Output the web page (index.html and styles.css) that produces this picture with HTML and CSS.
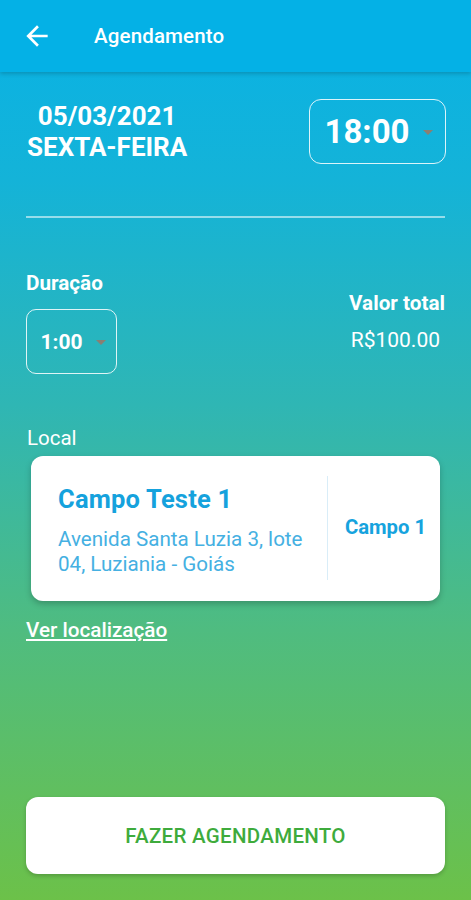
FILE: index.html
```html
<!DOCTYPE html>
<html lang="pt">
<head>
<meta charset="utf-8">
<title>Agendamento</title>
<link rel="stylesheet" href="styles.css">
</head>
<body>
<div class="app">
  <header class="topbar">
    <svg class="back" width="32" height="32" viewBox="0 0 24 24"><path d="M20 11H7.83l5.59-5.59L12 4l-8 8 8 8 1.41-1.41L7.83 13H20v-2z" fill="#fff"/></svg>
    <h1 class="title">Agendamento</h1>
  </header>
  <main class="content">
    <section class="date-row">
      <div class="date">
        <div>05/03/2021</div>
        <div>SEXTA-FEIRA</div>
      </div>
      <div class="select select-time">
        <span class="select-value">18:00</span>
        <span class="caret"></span>
      </div>
    </section>
    <hr class="divider">
    <section class="info-row">
      <div class="duration">
        <div class="label">Duração</div>
        <div class="select select-dur">
          <span class="select-value">1:00</span>
          <span class="caret"></span>
        </div>
      </div>
      <div class="total">
        <div class="label">Valor total</div>
        <div class="price">R$100.00</div>
      </div>
    </section>
    <section class="local">
      <div class="local-label">Local</div>
      <div class="card">
        <div class="card-main">
          <div class="card-title">Campo Teste 1</div>
          <div class="card-addr">Avenida Santa Luzia 3, lote 04, Luziania - Goiás</div>
        </div>
        <div class="card-side">Campo 1</div>
      </div>
      <a class="link" href="#">Ver localização</a>
    </section>
    <div class="spacer"></div>
    <button class="cta">FAZER AGENDAMENTO</button>
  </main>
</div>
</body>
</html>
```
FILE: styles.css
```css
* { box-sizing: border-box; }
html, body { margin: 0; padding: 0; }
body {
  font-family: Roboto, "Noto Sans", Arial, sans-serif;
  color: #fff;
}
.app {
  width: 471px;
  height: 900px;
  display: flex;
  flex-direction: column;
  background: linear-gradient(180deg, #08b2e6 0%, #14b3d8 20%, #2fb6b4 45%, #4fbc80 70%, #6cc149 100%);
}
.topbar {
  height: 72px;
  flex: none;
  background: #04b1e6;
  display: flex;
  align-items: center;
  padding-left: 21px;
  box-shadow: 0 2px 4px rgba(0,0,0,0.18);
  position: relative;
  z-index: 1;
}
.back { display: block; width: 32px; height: 32px; }
.title {
  margin: 0 0 0 41px;
  font-size: 20.5px;
  font-weight: 500;
  letter-spacing: 0.15px;
}
.content {
  flex: 1;
  display: flex;
  flex-direction: column;
  padding: 26px 26px 26px 26px;
}
.date-row {
  display: flex;
  justify-content: space-between;
  align-items: flex-start;
  height: 118px;
}
.date {
  font-size: 26px;
  font-weight: 700;
  line-height: 31px;
  text-align: center;
  margin-top: 3px;
  margin-left: 1px;
}
.select {
  border: 1.5px solid rgba(255,255,255,0.85);
  border-radius: 12px;
  display: flex;
  align-items: center;
}
.select-time {
  width: 137px;
  height: 65px;
  margin-top: 1px;
  margin-right: -1px;
  padding-left: 14.5px;
}
.select-time .select-value { font-size: 33px; font-weight: 700; line-height: 40px; }
.select-time .caret { margin-left: 13px; }
.caret {
  width: 0; height: 0;
  border-left: 5px solid transparent;
  border-right: 5px solid transparent;
  border-top: 5px solid #8a7f73;
  margin-top: 1px;
}
.divider {
  margin: 0;
  border: none;
  height: 2px;
  background: rgba(255,255,255,0.55);
}
.info-row {
  display: flex;
  justify-content: space-between;
  margin-top: 53px;
}
.label { font-size: 20.7px; font-weight: 700; line-height: 24px; }
.select-dur {
  width: 91px;
  height: 65px;
  margin-top: 14px;
  border-radius: 10px;
  padding-left: 13.5px;
}
.select-dur .select-value { font-size: 21px; font-weight: 700; line-height: 26px; }
.select-dur .caret { margin-left: 13px; }
.total {
  text-align: right;
  padding-top: 20px;
}
.price {
  font-size: 21px;
  line-height: 24px;
  margin-top: 13px;
  margin-right: 5px;
}
.local { margin-top: 52px; }
.local-label { font-size: 20.5px; line-height: 24px; margin-left: 1px; }
.card {
  margin: 6px 5px 0 5px;
  height: 145px;
  background: #fff;
  border-radius: 12px;
  box-shadow: 0 3px 6px rgba(0,0,0,0.22);
  display: flex;
  align-items: center;
  padding: 20px 0 21px 0;
}
.card-main {
  width: 297px;
  padding-left: 27px;
  padding-right: 6px;
  align-self: stretch;
  border-right: 1.5px solid #d9edf8;
  padding-top: 8px;
}
.card-title {
  color: #15a2dd;
  font-size: 25.5px;
  line-height: 30px;
  font-weight: 700;
  letter-spacing: 0.2px;
}
.card-addr {
  color: #45b0e2;
  font-size: 20.6px;
  line-height: 25px;
  margin-top: 13px;
}
.card-side {
  flex: 1;
  text-align: center;
  color: #16a3de;
  font-size: 20.3px;
  font-weight: 700;
  padding-left: 3px;
  margin-top: -2px;
}
.link {
  display: inline-block;
  margin-top: 17px;
  color: #fff;
  font-size: 20.7px;
  line-height: 24px;
  font-weight: 500;
  text-decoration: underline;
  text-underline-offset: 2px;
  align-self: flex-start;
}
.spacer { flex: 1; }
.cta {
  flex: none;
  height: 77px;
  border: none;
  border-radius: 12px;
  background: #fff;
  box-shadow: 0 2px 4px rgba(0,0,0,0.2);
  color: #3eab3c;
  font-family: Roboto, "Noto Sans", Arial, sans-serif;
  font-size: 20.5px;
  font-weight: 500;
  letter-spacing: 0.3px;
  width: 100%;
}
```
